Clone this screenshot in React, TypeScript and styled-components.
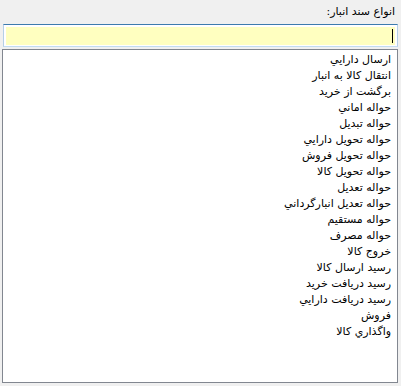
import React from 'react';
import styled, { createGlobalStyle } from 'styled-components';

const GlobalStyle = createGlobalStyle`
  html, body {
    margin: 0;
    padding: 0;
    background: #f0f0f0;
  }
  body {
    font-family: Tahoma, "DejaVu Sans", sans-serif;
    font-size: 11px;
    color: #000;
  }
`;

const Panel = styled.div`
  width: 401px;
  height: 386px;
  box-sizing: border-box;
  padding: 3px 3px 0 2px;
  display: flex;
  flex-direction: column;
  direction: rtl;
`;

const Label = styled.div`
  height: 21px;
  line-height: 18px;
  padding-right: 3px;
`;

const Field = styled.div`
  height: 23px;
  margin: 0 0 2px 0;
  margin-left: 1px;
  box-sizing: border-box;
  border: 1px solid #b5cfe7;
  border-top-color: #3d7bad;
  border-bottom-color: #c3dcf0;
  background: #fff;
  padding: 2px 2px 1px 2px;
  display: flex;
`;

const FieldInner = styled.div`
  flex: 1;
  background: #ffffc0;
  display: flex;
  align-items: center;
  padding-right: 2px;
`;

const Caret = styled.span`
  width: 1px;
  height: 14px;
  background: #000;
`;

const ListBox = styled.ul`
  margin: 0;
  padding: 2px 6px 0 0;
  list-style: none;
  height: 334px;
  box-sizing: border-box;
  border: 1px solid #828790;
  background: #fff;
  overflow: hidden;
`;

const Item = styled.li`
  height: 16px;
  line-height: 16px;
  white-space: nowrap;
`;

const items = [
  'ارسال دارايي',
  'انتقال كالا به انبار',
  'برگشت از خريد',
  'حواله اماني',
  'حواله تبديل',
  'حواله تحويل دارايي',
  'حواله تحويل فروش',
  'حواله تحويل كالا',
  'حواله تعديل',
  'حواله تعديل انبارگرداني',
  'حواله مستقيم',
  'حواله مصرف',
  'خروج كالا',
  'رسيد ارسال كالا',
  'رسيد دريافت خريد',
  'رسيد دريافت دارايي',
  'فروش',
  'واگذاري كالا',
];

const App: React.FC = () => {
  return (
    <>
      <GlobalStyle />
      <Panel>
        <Label>انواع سند انبار:</Label>
        <Field>
          <FieldInner>
            <Caret />
          </FieldInner>
        </Field>
        <ListBox>
          {items.map((item) => (
            <Item key={item}>{item}</Item>
          ))}
        </ListBox>
      </Panel>
    </>
  );
};

export default App;
